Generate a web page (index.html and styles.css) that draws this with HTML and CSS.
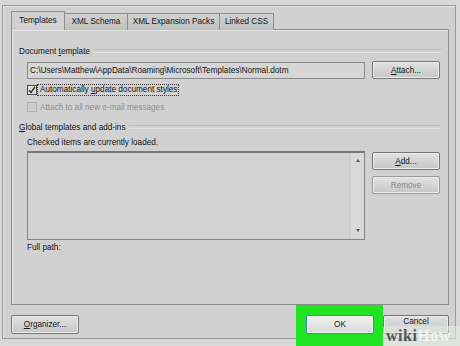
FILE: index.html
```html
<!DOCTYPE html>
<html lang="en">
<head>
    <meta charset="UTF-8">
    <title>Templates and Add-ins</title>
    <link rel="stylesheet" href="styles.css">
</head>
<body>
<div class="frame">
    <div class="tabs">
        <span class="tab active t1">Templates</span>
        <span class="tab t2">XML Schema</span>
        <span class="tab t3">XML Expansion Packs</span>
        <span class="tab t4">Linked CSS</span>
    </div>
    <div class="panel">
        <div class="group"><span>Document <u>t</u>emplate</span></div>
        <div class="row">
            <div class="field">C:\Users\Matthew\AppData\Roaming\Microsoft\Templates\Normal.dotm</div>
            <button class="btn"><u>A</u>ttach...</button>
        </div>
        <div class="check">
            <span class="box">
                <svg width="8" height="8" viewBox="0 0 8 8"><path d="M1 4.2 L3 6.5 L7 1" fill="none" stroke="#222" stroke-width="1.3"/></svg>
            </span>
            <span class="focus">Automatically <u>u</u>pdate document styles</span>
        </div>
        <div class="check disabled">
            <span class="box"></span>
            <span class="label">Attach to all new e-mail messages</span>
        </div>
        <div class="group second"><span><u>G</u>lobal templates and add-ins</span></div>
        <div class="note">Checked items are currently loaded.</div>
        <div class="row list-row">
            <div class="list">
                <div class="scroll">
                    <span class="arrow up"></span>
                    <span class="arrow down"></span>
                </div>
            </div>
            <div class="side">
                <button class="btn"><u>A</u>dd...</button>
                <button class="btn off">Remove</button>
            </div>
        </div>
        <div class="note path">Full path:</div>
    </div>
    <div class="footer">
        <button class="btn"><u>O</u>rganizer...</button>
        <div class="actions">
            <span class="hl"><button class="btn ok">OK</button></span>
            <button class="btn cancel">Cancel</button>
        </div>
    </div>
</div>
<div class="watermark"><span class="wiki">wiki</span><span class="how">How</span></div>
</body>
</html>
```

FILE: styles.css
```css
*{
    margin: 0;
    padding: 0;
    box-sizing: border-box;
}
body{
    width: 460px;
    height: 346px;
    overflow: hidden;
    background: #d8d8d8;
    font-family: "Liberation Sans", Arial, sans-serif;
    font-size: 8.2px;
    color: #141414;
    position: relative;
}
.frame{
    margin: 5px 4px 0 2px;
    border: 1px solid #9a9a9a;
    box-shadow: inset 1px 1px 0 #e6e6e6;
    background: #d1d1d1;
    padding: 5px 6px 4px 8px;
}
.tabs{
    display: flex;
    align-items: flex-end;
    height: 19px;
    margin-bottom: -1px;
}
.tab{
    height: 17px;
    line-height: 15px;
    text-align: center;
    border: 1px solid #8d8d8d;
    border-bottom: none;
    border-left: none;
    background: linear-gradient(#d2d2d2, #c0c0c0);
    white-space: nowrap;
}
.tab.active{
    height: 19px;
    line-height: 18px;
    border-left: 1px solid #8d8d8d;
    background: #d1d1d1;
    position: relative;
    z-index: 1;
}
.t1{ width: 54px; }
.t2{ width: 63px; }
.t3{ width: 92px; }
.t4{ width: 54px; }

.panel{
    height: 276px;
    border: 1px solid #8d8d8d;
    box-shadow: inset 1px 1px 0 #e4e4e4;
    padding: 15px 7px 0 7px;
}
.group{
    display: flex;
    align-items: center;
    height: 12px;
    gap: 3px;
}
.group::after{
    content: "";
    flex: 1;
    height: 2px;
    border-top: 1px solid #bdbdbd;
    border-bottom: 1px solid #e2e2e2;
}
.group.second{
    margin-top: 8px;
}
.row{
    display: flex;
    gap: 7px;
    margin: 4px 0 0 8px;
    align-items: flex-start;
}
.field{
    width: 338px;
    flex-shrink: 0;
    height: 17px;
    margin-top: 1px;
    line-height: 15px;
    padding-left: 2px;
    border: 1px solid #8a8a8a;
    background: #d6d6d6;
    white-space: nowrap;
    overflow: hidden;
}
.btn{
    width: 68px;
    height: 18px;
    flex-shrink: 0;
    font: inherit;
    color: #141414;
    border: 1px solid #767676;
    border-radius: 2px;
    background: linear-gradient(#e2e2e2, #c6c6c6);
    box-shadow: inset 0 0 0 1px #ececec;
}
.btn.off{
    color: #8a8a8a;
    border-color: #9a9a9a;
}
.check{
    display: flex;
    align-items: center;
    height: 12px;
    margin: 5px 0 0 8px;
}
.box{
    width: 10px;
    height: 10px;
    border: 1px solid #4a4a4a;
    background: #dedede;
    display: flex;
    align-items: center;
    justify-content: center;
}
.focus{
    padding: 0 1px 0 2px;
    border: 1px dotted #333;
    line-height: 10px;
}
.check.disabled{
    margin-top: 5px;
}
.check.disabled .box{
    border-color: #b2b2b2;
    background: #cecece;
}
.check.disabled .label{
    color: #8e8e8e;
    margin-left: 3px;
}
.note{
    height: 12px;
    line-height: 12px;
    margin: 4px 0 0 8px;
}
.list-row{
    margin-top: 2px;
}
.list{
    width: 338px;
    flex-shrink: 0;
    height: 89px;
    border: 1px solid #858585;
    border-top: 2px solid #777;
    background: #d2d2d2;
    display: flex;
    justify-content: flex-end;
}
.scroll{
    width: 14px;
    background: #d9d9d9;
    border-left: 1px solid #cdcdcd;
    display: flex;
    flex-direction: column;
    justify-content: space-between;
    align-items: center;
    padding: 6px 0 7px;
}
.arrow{
    width: 0;
    height: 0;
    border-left: 2.5px solid transparent;
    border-right: 2.5px solid transparent;
}
.arrow.up{
    border-bottom: 3px solid #555;
}
.arrow.down{
    border-top: 3px solid #555;
}
.side{
    display: flex;
    flex-direction: column;
    gap: 6px;
    padding-top: 1px;
}
.note.path{
    margin-top: 2px;
}
.footer{
    display: flex;
    justify-content: space-between;
    margin-top: 10px;
}
.footer .btn{
    height: 19px;
}
.actions{
    display: flex;
    gap: 9px;
}
.hl{
    position: relative;
    display: flex;
}
.hl::before{
    content: "";
    position: absolute;
    left: -10px;
    right: -9px;
    top: -10px;
    bottom: -13px;
    background: #22e322;
}
.btn.ok{
    position: relative;
    border-color: #3b8fb8;
    background: linear-gradient(#f2f2f2, #d9d9d9);
}
.btn.cancel{
    width: 66px;
    line-height: 10px;
    padding-bottom: 6px;
}
.watermark{
    position: absolute;
    left: 383px;
    top: 326px;
    width: 77px;
    height: 20px;
    border-radius: 3px 0 0 0;
    background: rgba(226, 236, 222, 0.6);
    font-family: "Liberation Serif", "DejaVu Serif", serif;
    font-weight: bold;
    font-size: 16px;
    line-height: 20px;
    padding-left: 3px;
    letter-spacing: 0.5px;
}
.wiki{
    color: #555;
}
.how{
    color: #f4f4f4;
}
```
